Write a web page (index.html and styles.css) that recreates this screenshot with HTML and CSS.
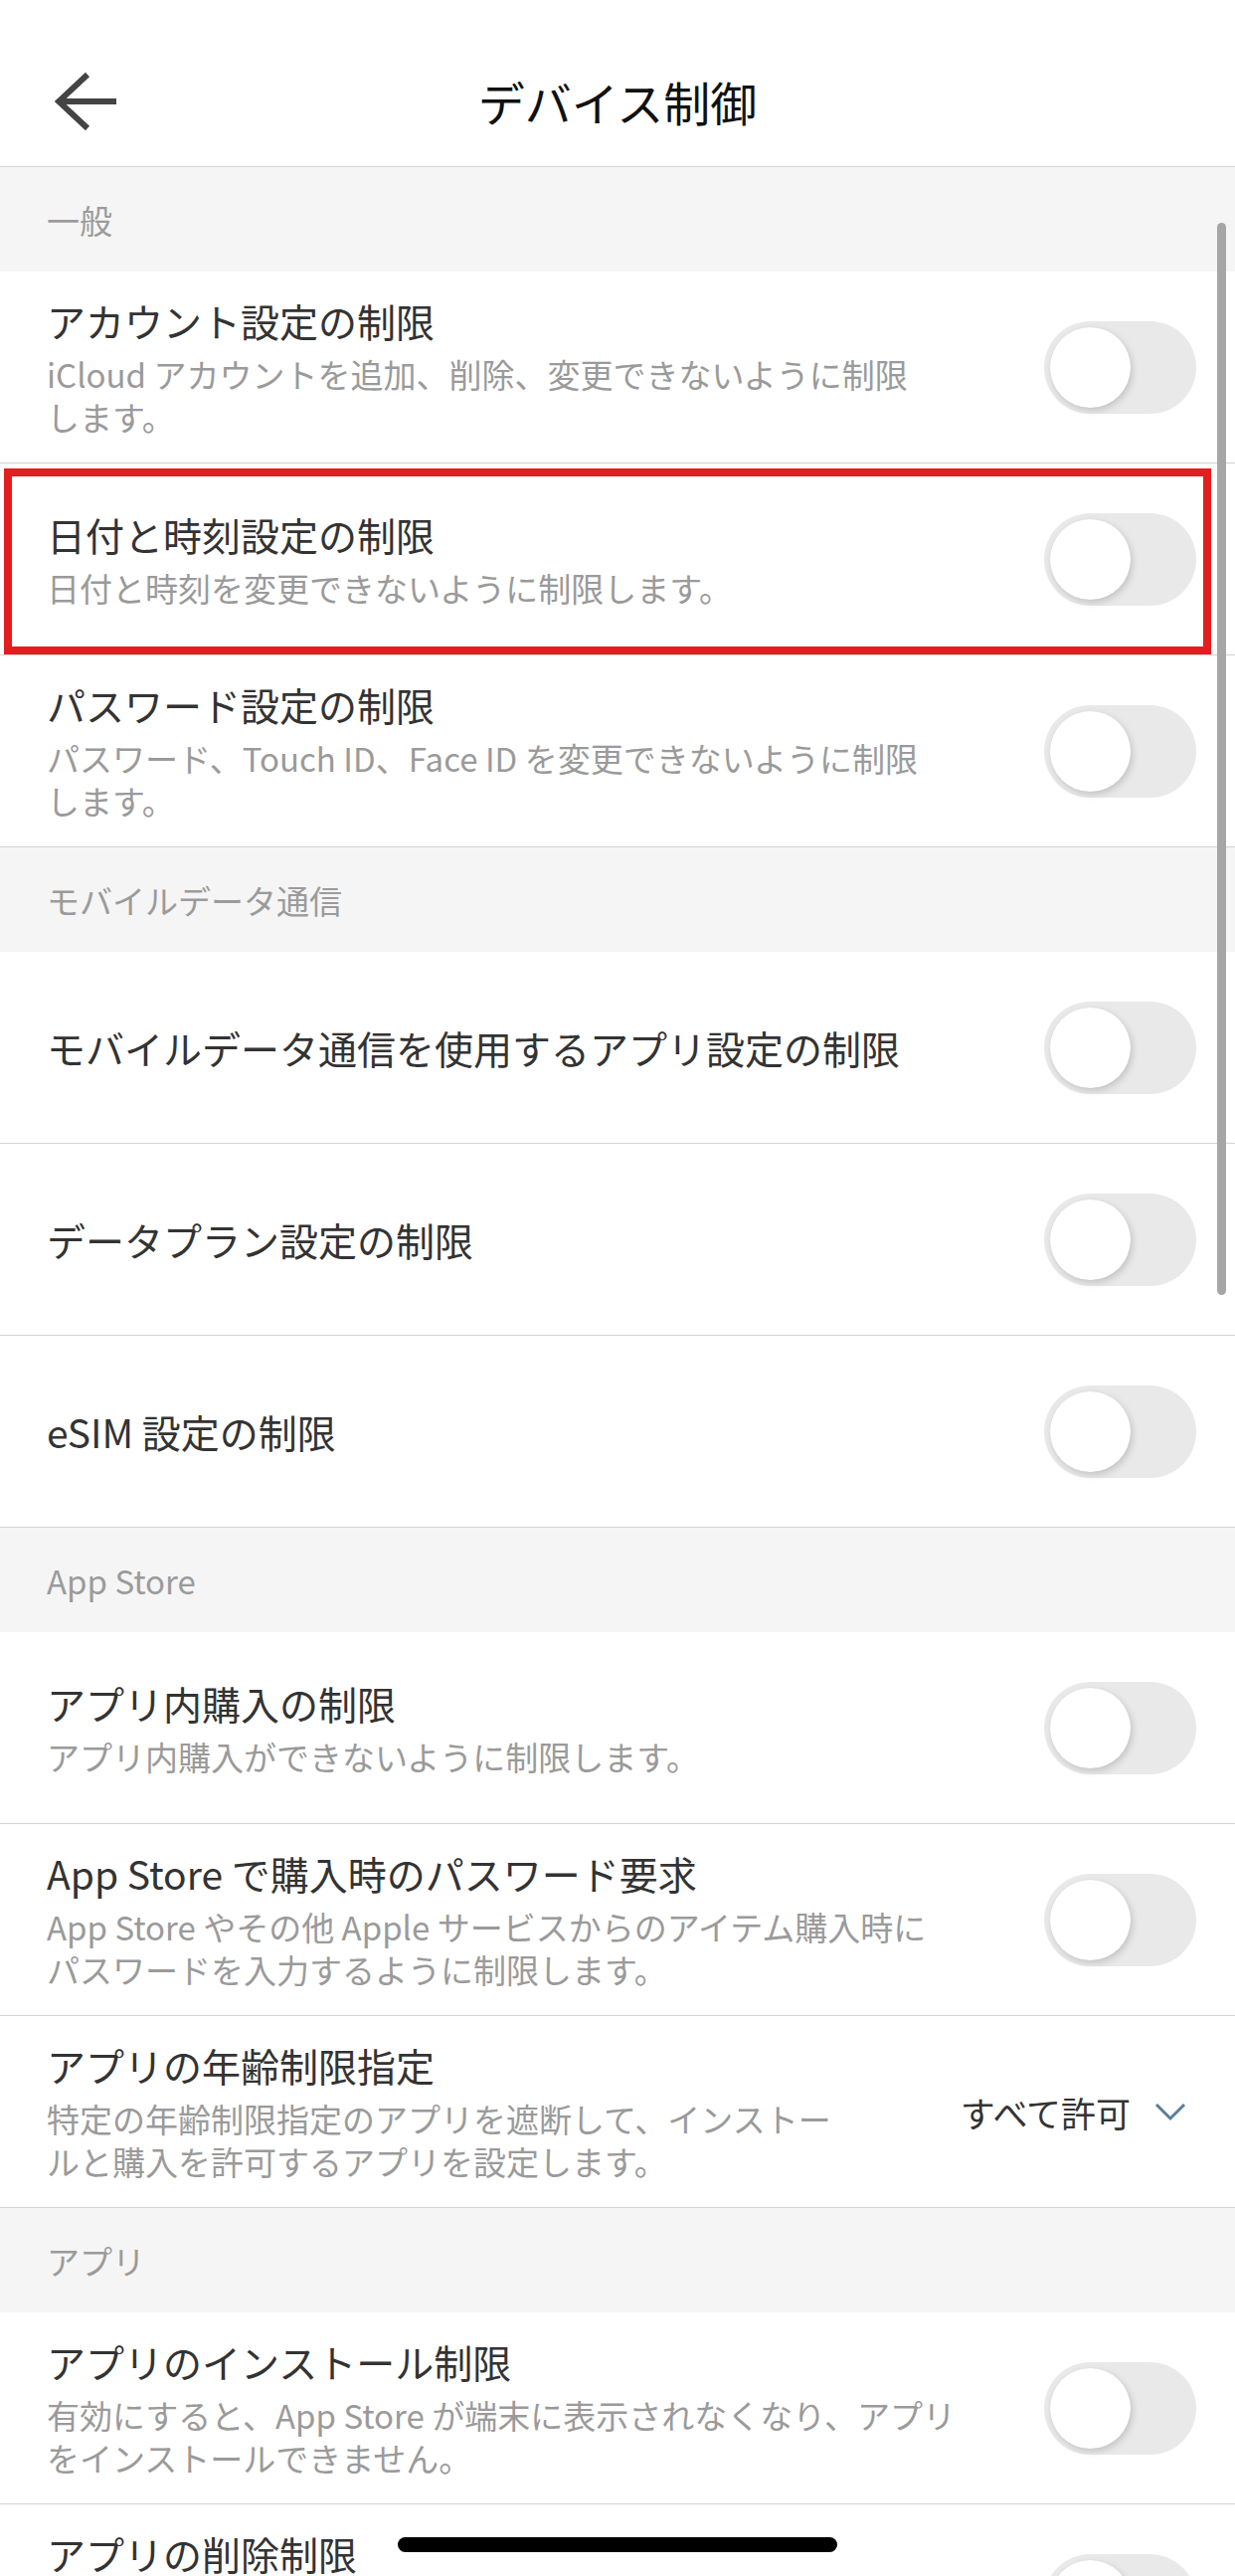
FILE: index.html
```html
<!DOCTYPE html>
<html lang="ja">
  <head>
    <meta charset="UTF-8" />
    <meta name="viewport" content="width=device-width, initial-scale=1.0" />
    <title>デバイス制御</title>
    <link rel="stylesheet" href="styles.css">
  </head>

  <body>
    <div class="screen">
      <header class="topbar">
        <span class="back">
          <svg width="64" height="60" viewBox="0 0 64 60">
            <path d="M33 3 L4 30 L33 57 M4 30 H62" fill="none" stroke="#444" stroke-width="6" />
          </svg>
        </span>
        <h1>デバイス制御</h1>
        <span></span>
      </header>

      <!-- 一般 -->
      <div class="group">一般</div>
      <ul class="list">
        <li class="item">
          <div class="text">
            <p class="name">アカウント設定の制限</p>
            <p class="desc">iCloud アカウントを追加、削除、変更できないように制限<br>します。</p>
          </div>
          <span class="switch"></span>
        </li>
        <li class="item marked">
          <div class="text">
            <p class="name">日付と時刻設定の制限</p>
            <p class="desc">日付と時刻を変更できないように制限します。</p>
          </div>
          <span class="switch"></span>
        </li>
        <li class="item">
          <div class="text">
            <p class="name">パスワード設定の制限</p>
            <p class="desc">パスワード、Touch ID、Face ID を変更できないように制限<br>します。</p>
          </div>
          <span class="switch"></span>
        </li>
      </ul>

      <!-- モバイルデータ通信 -->
      <div class="group">モバイルデータ通信</div>
      <ul class="list">
        <li class="item">
          <div class="text">
            <p class="name">モバイルデータ通信を使用するアプリ設定の制限</p>
          </div>
          <span class="switch"></span>
        </li>
        <li class="item">
          <div class="text">
            <p class="name">データプラン設定の制限</p>
          </div>
          <span class="switch"></span>
        </li>
        <li class="item">
          <div class="text">
            <p class="name">eSIM 設定の制限</p>
          </div>
          <span class="switch"></span>
        </li>
      </ul>

      <!-- App Store -->
      <div class="group">App Store</div>
      <ul class="list">
        <li class="item">
          <div class="text">
            <p class="name">アプリ内購入の制限</p>
            <p class="desc">アプリ内購入ができないように制限します。</p>
          </div>
          <span class="switch"></span>
        </li>
        <li class="item">
          <div class="text">
            <p class="name">App Store で購入時のパスワード要求</p>
            <p class="desc">App Store やその他 Apple サービスからのアイテム購入時に<br>パスワードを入力するように制限します。</p>
          </div>
          <span class="switch"></span>
        </li>
        <li class="item">
          <div class="text">
            <p class="name">アプリの年齢制限指定</p>
            <p class="desc">特定の年齢制限指定のアプリを遮断して、インストールと購入を許可するアプリを設定します。</p>
          </div>
          <span class="select">
            すべて許可
            <svg width="32" height="20" viewBox="0 0 32 20">
              <path d="M2 3 L16 17 L30 3" fill="none" stroke="#5b7d99" stroke-width="3" />
            </svg>
          </span>
        </li>
      </ul>

      <!-- アプリ -->
      <div class="group">アプリ</div>
      <ul class="list">
        <li class="item">
          <div class="text">
            <p class="name">アプリのインストール制限</p>
            <p class="desc">有効にすると、App Store が端末に表示されなくなり、アプリをインストールできません。</p>
          </div>
          <span class="switch"></span>
        </li>
        <li class="item">
          <div class="text">
            <p class="name">アプリの削除制限</p>
            <p class="desc">有効にすると、端末からアプリを削除できないように制限します。</p>
          </div>
          <span class="switch"></span>
        </li>
      </ul>

      <div class="scrollbar"></div>
      <div class="home-bar"></div>
    </div>
  </body>
</html>
```

FILE: styles.css
```css
* {
  margin: 0;
  padding: 0;
  box-sizing: border-box;
}

html,
body {
  width: 1242px;
  height: 2590px;
  overflow: hidden;
  background-color: #fff;
}

body {
  font-family: "Noto Sans CJK JP", "Noto Sans", sans-serif;
  color: #333;
}

.screen {
  position: relative;
  height: 2590px;
  overflow: hidden;
}

/* 顶部导航 */
.topbar {
  display: grid;
  grid-template-columns: 1fr auto 1fr;
  align-items: center;
  height: 168px;
  padding-top: 36px;
  border-bottom: 1px solid #d3d3d3;
}

.topbar .back {
  display: flex;
  padding-left: 55px;
}

.topbar h1 {
  font-size: 47px;
  font-weight: 400;
  line-height: 60px;
  color: #111;
}

/* 分组标题 */
.group {
  display: flex;
  align-items: center;
  height: 105px;
  padding-left: 47px;
  background-color: #f5f5f5;
  font-size: 33px;
  color: #9b9b9b;
}

.list {
  list-style-type: none;
}

.item {
  display: flex;
  align-items: center;
  height: 193px;
  padding: 0 39px 0 47px;
  border-bottom: 1px solid #d3d3d3;
}

.item .text {
  flex: 1;
}

.item .name {
  font-size: 39px;
  line-height: 50px;
  color: #333;
}

.item .desc {
  margin-top: 8px;
  font-size: 33px;
  line-height: 43px;
  color: #9a9a9a;
}

/* 红框标注 */
.item.marked {
  position: relative;
}

.item.marked::after {
  content: "";
  position: absolute;
  left: 4px;
  right: 24px;
  top: 5px;
  bottom: 0;
  border: 8px solid #e41e20;
  pointer-events: none;
}

/* 开关 (关闭状态) */
.switch {
  display: flex;
  align-items: center;
  flex-shrink: 0;
  width: 153px;
  height: 93px;
  margin-left: 70px;
  padding: 0 6px;
  background-color: #e9e9e9;
  border-radius: 47px;
}

.switch::before {
  content: "";
  width: 81px;
  height: 81px;
  background-color: #fff;
  border-radius: 50%;
  box-shadow: 2px 3px 7px rgba(0, 0, 0, 0.16), 0 0 1px rgba(0, 0, 0, 0.08);
}

/* 下拉选择 */
.select {
  display: flex;
  align-items: center;
  flex-shrink: 0;
  gap: 24px;
  margin: 0 10px 0 100px;
  font-size: 35px;
  color: #333;
}

.scrollbar {
  position: absolute;
  top: 224px;
  right: 9px;
  width: 9px;
  height: 1078px;
  background-color: #a6a6a6;
  border-radius: 5px;
}

.home-bar {
  position: absolute;
  top: 2551px;
  left: 400px;
  width: 442px;
  height: 15px;
  background-color: #000;
  border-radius: 8px;
}
```
